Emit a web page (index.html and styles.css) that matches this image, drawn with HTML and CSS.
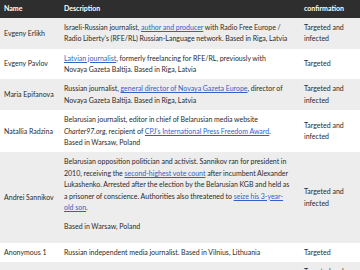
FILE: index.html
```html
<!DOCTYPE html>
<html lang="en">
<head>
<meta charset="utf-8">
<title>Targets</title>
<link rel="stylesheet" href="styles.css">
</head>
<body>
<table class="targets">
  <colgroup>
    <col class="c-name">
    <col class="c-desc">
    <col class="c-conf">
  </colgroup>
  <thead>
    <tr>
      <th>Name</th>
      <th>Description</th>
      <th>Infection confirmation</th>
    </tr>
  </thead>
  <tbody>
    <tr>
      <td>Evgeny Erlikh</td>
      <td>Israeli-Russian journalist, <a href="#">author and producer</a> with Radio Free Europe&nbsp;/<br>Radio Liberty’s (RFE/RL) Russian-Language network. Based in Riga, Latvia</td>
      <td>Targeted and infected</td>
    </tr>
    <tr>
      <td>Evgeny Pavlov</td>
      <td><a href="#">Latvian journalist</a>, formerly freelancing for RFE/RL, previously with<br>Novaya Gazeta Baltija. Based in Riga, Latvia</td>
      <td>Targeted</td>
    </tr>
    <tr>
      <td>Maria Epifanova</td>
      <td>Russian journalist, <a href="#">general director of Novaya Gazeta Europe</a>, director of<br>Novaya Gazeta Baltija. Based in Riga, Latvia</td>
      <td>Targeted and infected</td>
    </tr>
    <tr>
      <td>Natallia Radzina</td>
      <td>Belarusian journalist, editor in chief of Belarusian media website<br><em>Charter97.org</em>, recipient of <a href="#">CPJ’s International Press Freedom Award</a>.<br>Based in Warsaw, Poland</td>
      <td>Targeted and infected</td>
    </tr>
    <tr>
      <td>Andrei Sannikov</td>
      <td>
        <p>Belarusian opposition politician and activist. Sannikov ran for president in<br>2010, receiving the <a href="#">second-highest vote count</a> after incumbent Alexander<br>Lukashenko. Arrested after the election by the Belarusian KGB and held as<br>a prisoner of conscience. Authorities also threatened to <a href="#">seize his 3-year-<br>old son</a>.</p>
        <p>Based in Warsaw, Poland</p>
      </td>
      <td>Targeted and infected</td>
    </tr>
    <tr>
      <td>Anonymous 1</td>
      <td>Russian independent media journalist. Based in Vilnius, Lithuania</td>
      <td>Targeted</td>
    </tr>
    <tr>
      <td>Anonymous 2</td>
      <td>Belarusian civil society member. Based in Vilnius, Lithuania</td>
      <td>Targeted and infected</td>
    </tr>
  </tbody>
</table>
</body>
</html>
```
FILE: styles.css
```css
html, body {
  margin: 0;
  padding: 0;
  background: #ffffff;
}
body {
  font-family: "Lato", "Noto Sans", sans-serif;
  font-size: 7px;
  line-height: 11.4px;
  color: #2b2b2b;
}
.targets {
  width: 360px;
  border-collapse: collapse;
  table-layout: fixed;
  margin-top: -9px;
}
.c-name { width: 60px; }
.c-desc { width: 240px; }
.c-conf { width: 60px; }
.targets th {
  background: #2e2e2e;
  color: #ffffff;
  font-weight: 700;
  text-align: left;
  vertical-align: bottom;
  padding: 1px 4px 3px;
}
.targets td {
  padding: 4px 4px;
  vertical-align: middle;
}
.targets td:nth-child(2) {
  padding-right: 0;
  word-spacing: -0.15px;
}
.targets tbody tr:nth-child(odd) td { background: #ededed; }
.targets td p { margin: 0 0 7px; }
.targets a { color: #3460c9; text-decoration: underline; }
```
